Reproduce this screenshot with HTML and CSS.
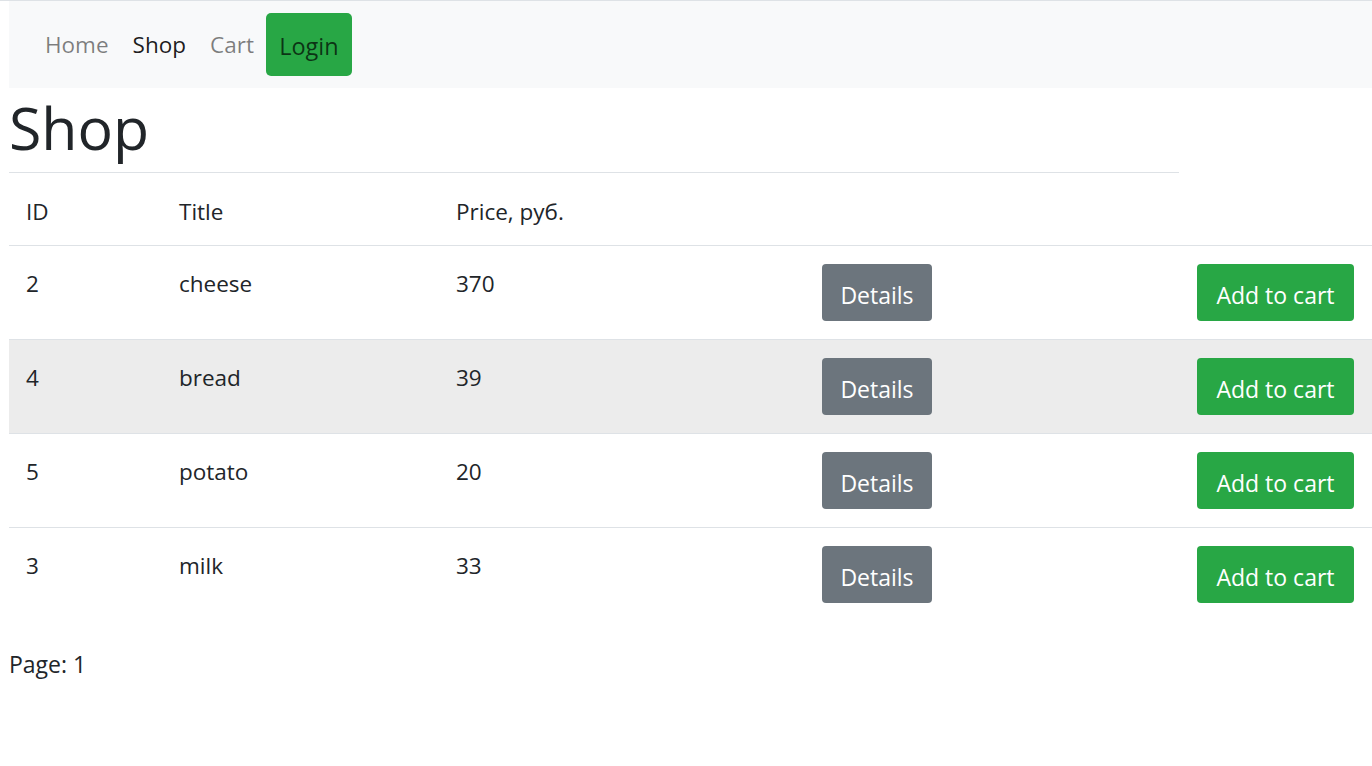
FILE: index.html
```html
<!DOCTYPE html>
<html lang="ru">
<head>
<meta charset="utf-8">
<title>Shop</title>
<link rel="stylesheet" href="styles.css">
</head>
<body>
<div class="page">
  <nav class="navbar">
    <a class="nav-link" href="#">Home</a>
    <a class="nav-link active" href="#">Shop</a>
    <a class="nav-link last" href="#">Cart</a>
    <a class="nav-btn" href="#">Login</a>
  </nav>
  <h1 class="title">Shop</h1>
  <hr class="rule">
  <table class="shop-table">
    <colgroup>
      <col class="c-id"><col class="c-title"><col class="c-price"><col class="c-det"><col class="c-add">
    </colgroup>
    <thead>
      <tr><th>ID</th><th>Title</th><th>Price, руб.</th><th></th><th></th></tr>
    </thead>
    <tbody>
      <tr><td>2</td><td>cheese</td><td>370</td><td class="bcell"><a class="btn btn-gray" href="#">Details</a></td><td class="bcell"><a class="btn btn-green" href="#">Add to cart</a></td></tr>
      <tr class="striped"><td>4</td><td>bread</td><td>39</td><td class="bcell"><a class="btn btn-gray" href="#">Details</a></td><td class="bcell"><a class="btn btn-green" href="#">Add to cart</a></td></tr>
      <tr><td>5</td><td>potato</td><td>20</td><td class="bcell"><a class="btn btn-gray" href="#">Details</a></td><td class="bcell"><a class="btn btn-green" href="#">Add to cart</a></td></tr>
      <tr><td>3</td><td>milk</td><td>33</td><td class="bcell"><a class="btn btn-gray" href="#">Details</a></td><td class="bcell"><a class="btn btn-green" href="#">Add to cart</a></td></tr>
    </tbody>
  </table>
  <p class="pager">Page: 1</p>
</div>
</body>
</html>
```

FILE: styles.css
```css
html, body {
  margin: 0;
  padding: 0;
  background: #fff;
}
body {
  border-top: 1px solid #dee2e6;
  font-family: "Open Sans", "Noto Sans", sans-serif;
  color: #212529;
  font-size: 22.5px;
  line-height: 33px;
}
.page {
  padding-left: 9px;
}
.navbar {
  display: flex;
  align-items: center;
  height: 87px;
  background: #f8f9fa;
  padding-left: 36px;
}
.nav-link {
  font-size: 22.5px;
  color: rgba(0, 0, 0, 0.5);
  text-decoration: none;
  margin-right: 24px;
}
.nav-link.active {
  color: rgba(0, 0, 0, 0.9);
}
.nav-link.last {
  margin-right: 12px;
}
.nav-btn {
  display: flex;
  align-items: center;
  justify-content: center;
  width: 86px;
  height: 63px;
  box-sizing: border-box;
  padding-top: 4px;
  background: #28a745;
  border-radius: 5px;
  color: rgba(0, 0, 0, 0.7);
  text-decoration: none;
  font-size: 23.5px;
}
.title {
  margin: 0;
  font-size: 59px;
  font-weight: 500;
  line-height: 79px;
}
.rule {
  margin: 5px 0 0;
  width: 1170px;
  border: 0;
  border-top: 1px solid #dee2e6;
  height: 0;
}
.shop-table {
  width: 100%;
  border-collapse: collapse;
  table-layout: fixed;
}
.c-id { width: 153px; }
.c-title { width: 277px; }
.c-price { width: 366px; }
.c-det { width: 375px; }
.shop-table th {
  text-align: left;
  font-weight: 400;
  padding: 22px 17px 17px;
  vertical-align: top;
  border-bottom: 1px solid #dee2e6;
}
.shop-table td {
  padding: 21px 17px 0;
  height: 72px;
  vertical-align: top;
  border-top: 1px solid #dee2e6;
}
.shop-table tbody tr:first-child td {
  border-top: 0;
}
.shop-table td.bcell {
  padding-top: 18px;
}
.striped td {
  background: #ececec;
}
.btn {
  display: inline-flex;
  align-items: center;
  justify-content: center;
  height: 57px;
  padding-top: 5px;
  box-sizing: border-box;
  border-radius: 4px;
  color: #fff;
  text-decoration: none;
  font-size: 23px;
}
.btn-gray { background: #6c757d; width: 110px; }
.btn-green { background: #28a745; width: 157px; }
.pager {
  margin: 27px 0 0;
  font-size: 23px;
}
```
